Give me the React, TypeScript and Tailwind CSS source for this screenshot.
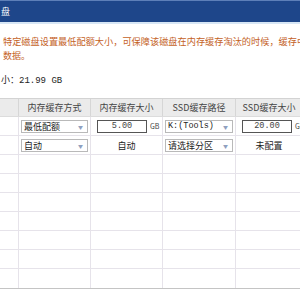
import React from "react";

const cols = "grid grid-cols-[19px_72px_72px_73px_80px]";

function Select({ label, mono }: { label: string; mono?: boolean }) {
  return (
    <div className="mx-[2px] h-[13px] border border-[#b9b9b9] bg-white flex items-center justify-between pl-[2px] pr-[4px]">
      <span className={mono ? "text-[8.5px] font-['Liberation_Mono',monospace]" : ""}>{label}</span>
      <span className="text-[5px] text-[#8fa0bf]">{"\u25BC"}</span>
    </div>
  );
}

function SizeInput({ value }: { value: string }) {
  return (
    <div className="flex items-center pl-[6px]">
      <div className="w-[50px] h-[13px] border border-[#555] bg-white flex items-center justify-center text-[8.5px] text-[#444] font-['Liberation_Mono',monospace]">
        {value}
      </div>
      <span className="ml-[3px] text-[7px] text-[#444]">GB</span>
    </div>
  );
}

export default function App() {
  const empty = Array.from({ length: 7 });
  return (
    <div className="w-[300px] h-[300px] overflow-hidden bg-white text-[9px] text-[#222] font-['Noto_Sans_CJK_SC','Noto_Sans',sans-serif] leading-none">
      {/* Title bar */}
      <div className="h-[22px] bg-[#1e468a] border-t border-[#5d7fb8] flex items-center pl-[1px] text-white text-[9px]">
        盘
      </div>
      <div className="h-[2px] bg-[#d7e6f5]" />

      {/* Description */}
      <div className="pt-[13px] pl-[3px] text-[#c4621f] text-[9.2px] whitespace-nowrap">
        特定磁盘设置最低配额大小，可保障该磁盘在内存缓存淘汰的时候，缓存中能
      </div>
      <div className="pt-[5px] pl-[3px] text-[#c4621f]">数据。</div>
      <div className="pt-[15px] pl-[1px] whitespace-nowrap">
        小：<span className="font-['Liberation_Mono',monospace] text-[9px]">21.99 GB</span>
      </div>

      {/* Table */}
      <div className="mt-[12px] border-b border-[#c4c4c4]">
        <div className={`${cols} h-[19px] bg-[#ebebeb] border-t border-[#d3d3d3] border-b border-b-[#dcdcdc] text-[#444]`}>
          <div className="border-r border-[#d6d6d6]" />
          <div className="border-r border-[#d6d6d6] flex items-center justify-center">内存缓存方式</div>
          <div className="border-r border-[#d6d6d6] flex items-center justify-center">内存缓存大小</div>
          <div className="border-r border-[#d6d6d6] flex items-center justify-center">SSD缓存路径</div>
          <div className="flex items-center justify-center pr-[14px]">SSD缓存大小</div>
        </div>

        <div className={`${cols} h-[19px] border-b border-[#e6e3ea] items-center`}>
          <div className="h-full border-r border-[#e6e3ea]" />
          <div className="h-full border-r border-[#e6e3ea] flex flex-col justify-center">
            <Select label="最低配额" />
          </div>
          <div className="h-full border-r border-[#e6e3ea] flex items-center">
            <SizeInput value="5.00" />
          </div>
          <div className="h-full border-r border-[#e6e3ea] flex flex-col justify-center">
            <Select label="K:(Tools)" mono />
          </div>
          <div className="h-full flex items-center">
            <SizeInput value="20.00" />
          </div>
        </div>

        <div className={`${cols} h-[19px] border-b border-[#e6e3ea] items-center`}>
          <div className="h-full border-r border-[#e6e3ea]" />
          <div className="h-full border-r border-[#e6e3ea] flex flex-col justify-center">
            <Select label="自动" />
          </div>
          <div className="h-full border-r border-[#e6e3ea] flex items-center justify-center">自动</div>
          <div className="h-full border-r border-[#e6e3ea] flex flex-col justify-center">
            <Select label="请选择分区" />
          </div>
          <div className="h-full flex items-center justify-center pr-[14px]">未配置</div>
        </div>

        {empty.map((_, i) => (
          <div key={i} className={`${cols} h-[19px] ${i < empty.length - 1 ? "border-b border-[#e6e3ea]" : ""}`}>
            <div className="border-r border-[#e6e3ea]" />
            <div className="border-r border-[#e6e3ea]" />
            <div className="border-r border-[#e6e3ea]" />
            <div className="border-r border-[#e6e3ea]" />
            <div />
          </div>
        ))}
      </div>
    </div>
  );
}
